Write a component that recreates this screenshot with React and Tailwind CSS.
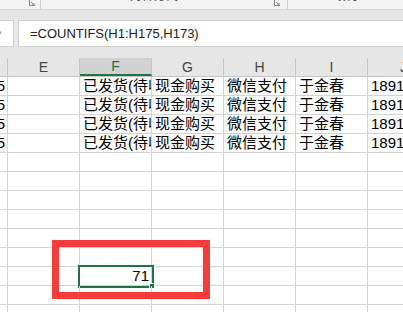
import React from 'react';

const rows = [
  { d: '175', f: '已发货(待收货)', g: '现金购买', h: '微信支付', i: '于金春', j: '18912345678' },
  { d: '175', f: '已发货(待收货)', g: '现金购买', h: '微信支付', i: '于金春', j: '18912345678' },
  { d: '175', f: '已发货(待收货)', g: '现金购买', h: '微信支付', i: '于金春', j: '18912345678' },
  { d: '175', f: '已发货(待收货)', g: '现金购买', h: '微信支付', i: '于金春', j: '18912345678' },
];

const cjk = { fontFamily: '"Liberation Sans", "Noto Sans CJK SC", sans-serif' };

function Launcher() {
  return (
    <svg width="6" height="6" viewBox="0 0 6 6" className="shrink-0">
      <path d="M0.5 0 V5.5 H6 M2 2 L5 5 M3 5 H5 V3" stroke="#8a8a8a" strokeWidth="1" fill="none" />
    </svg>
  );
}

function Cell({ children, right, sel }) {
  return (
    <div className={`relative h-full w-[72px] shrink-0 border-r border-[#d4d4d4] flex items-center ${right ? 'justify-end pr-[2px]' : 'pl-[3px]'}`}>
      <span className="min-w-0 whitespace-nowrap overflow-hidden text-[15px] leading-[18px] text-black">{children}</span>
      {sel && (
        <>
          <div className="absolute -left-[2px] -top-[2px] w-[76px] h-[23px] border-2 border-[#217346]" />
          <div className="absolute left-[69px] top-[16px] w-[6px] h-[6px] bg-[#217346] border border-white" />
        </>
      )}
    </div>
  );
}

export default function App() {
  const empty = Array.from({ length: 9 });

  return (
    <div className="relative w-[403px] h-[312px] overflow-hidden bg-white" style={cjk}>
      {/* ribbon tail */}
      <div className="flex h-[10px] bg-[#f3f3f3] border-b border-[#d5d5d5] overflow-hidden text-[12px] text-[#444]">
        <div className="w-[41px] h-full flex items-start justify-end pr-[5px] border-r border-[#cfcfcf]">
          <Launcher />
        </div>
        <div className="w-[247px] h-full flex items-start border-r border-[#cfcfcf]">
          <span className="ml-[89px] -mt-[11px] leading-[14px]">对齐方式</span>
          <div className="ml-auto mr-[7px]"><Launcher /></div>
        </div>
        <div className="flex-1 h-full">
          <span className="ml-[50px] -mt-[11px] block leading-[14px]">数字</span>
        </div>
      </div>

      {/* formula bar */}
      <div className="bg-[#e6e6e6] pt-[10px] pb-[11px]">
        <div className="flex h-[27px] gap-[4px]">
          <div className="w-[14px] h-full bg-white border-y border-r border-[#d0d0d0] flex items-center">
            <span className="text-[#999] text-[9px] leading-none -ml-[3px]">▾</span>
          </div>
          <div className="flex-1 h-full bg-white border-y border-l border-[#d0d0d0] flex items-center pl-[11px]">
            <span className="text-[13px] text-[#222] whitespace-nowrap">=COUNTIFS(H1:H175,H173)</span>
          </div>
        </div>
      </div>

      {/* column headers */}
      <div className="flex h-[19px] bg-[#e6e6e6] border-b border-[#c6c6c6] text-[14px] text-[#444]">
        <div className="w-[8px] shrink-0 border-r border-[#c6c6c6]" />
        {['E', 'F', 'G', 'H', 'I', 'J'].map((c) => (
          <div
            key={c}
            className={`w-[72px] shrink-0 flex items-center justify-center border-r border-[#c6c6c6] ${c === 'F' ? 'bg-[#d2d2d2] text-[#217346] border-b-2 border-b-[#217346]' : ''}`}
          >
            {c}
          </div>
        ))}
      </div>

      {/* grid */}
      {rows.map((r, k) => (
        <div key={k} className="flex h-[19px] border-b border-[#d4d4d4]">
          <div className="w-[8px] shrink-0 h-full border-r border-[#d4d4d4] flex items-center justify-end pr-[2px] overflow-hidden">
            <span className="text-[15px] leading-[18px] whitespace-nowrap">{r.d}</span>
          </div>
          <Cell />
          <Cell>{r.f}</Cell>
          <Cell>{r.g}</Cell>
          <Cell>{r.h}</Cell>
          <Cell>{r.i}</Cell>
          <Cell>{r.j}</Cell>
        </div>
      ))}
      {empty.map((_, k) => (
        <div key={k} className="flex h-[19px] border-b border-[#d4d4d4]">
          <div className="w-[8px] shrink-0 h-full border-r border-[#d4d4d4]" />
          <Cell />
          <Cell right sel={k === 6}>{k === 6 ? '71' : ''}</Cell>
          <Cell />
          <Cell />
          <Cell />
          <Cell />
        </div>
      ))}

      {/* annotation */}
      <div className="absolute left-[52px] top-[240px] w-[158px] h-[59px] border-[7px] border-[#fb3b3b]" />
    </div>
  );
}
